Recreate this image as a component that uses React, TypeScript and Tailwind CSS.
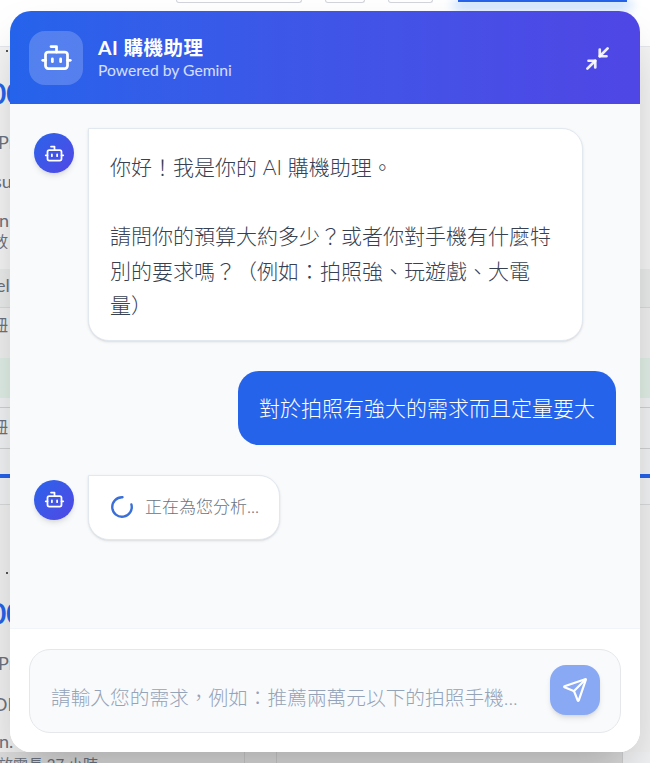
import { Bot, Loader2, Minimize2, Send } from "lucide-react";

const FONT = "font-['Lato','Noto_Sans_CJK_TC',sans-serif]";

// the phone list behind the chat, only its left edge shows
const PageBehind = () => {
  return (
    <div className="flex flex-col h-full text-[#6b7280]">
      <div className="h-[47px] shrink-0 bg-white border-b border-[#e5e7eb] flex items-start">
        <div className="ml-[176px] w-[126px] h-[3px] bg-white border border-t-0 border-[#d1d5db] rounded-b-md"></div>
        <div className="ml-[23px] w-[40px] h-[3px] bg-white border border-t-0 border-[#d1d5db] rounded-b-md"></div>
        <div className="ml-[23px] w-[45px] h-[3px] bg-white border border-t-0 border-[#d1d5db] rounded-b-md"></div>
        <div className="ml-[25px] w-[169px] h-[2px] bg-[#2563eb] shadow-[0_4px_12px_4px_#bfdbfe]"></div>
      </div>
      <div className="flex-1 bg-[#f1f2f3] flex flex-col">
        <div className="h-[222px] bg-[#f4f4f4] overflow-hidden">
          <div className="ml-[6px] mt-[3px] w-[2px] h-[2px] rounded-full bg-[#222]"></div>
          <div className="h-[36px] mt-[23px] -ml-[10px] text-[#2563eb] text-[28px] font-bold leading-[36px]">00</div>
          <div className="h-[28px] mt-[17px] -ml-[2px] text-[18px] leading-[28px]">Pr</div>
          <div className="h-[28px] mt-[12px] -ml-[6px] text-[18px] leading-[26px]">su</div>
          <div className="h-[20px] mt-[15px] -ml-[1px] text-[18px] leading-[18px]">n</div>
          <div className="h-[20px] -ml-[7px] text-[15px] leading-[20px]">放</div>
        </div>
        <div className="h-[39px] bg-[#e9eaea] border-b border-[#d9dadb] -ml-[4px] text-[18px] leading-[32px]">el</div>
        <div className="h-[50px] bg-[#efefef] -ml-[8px] text-[16px] leading-[34px]">鈕</div>
        <div className="h-[40px] bg-[#dfeee6]"></div>
        <div className="h-[10px] border-b border-[#cfd0d1]"></div>
        <div className="h-[41px] border-b border-[#cfd0d1] -ml-[8px] text-[16px] leading-[38px]">鈕</div>
        <div className="h-[25px]"></div>
        <div className="h-[4px] bg-[#2563eb]"></div>
        <div className="h-[27px] border-b border-[#d9dadb]"></div>
        <div className="h-[247px] bg-[#f0f0f0] overflow-hidden">
          <div className="ml-[6px] mt-[67px] w-[2px] h-[2px] rounded-full bg-[#222]"></div>
          <div className="h-[36px] mt-[21px] -ml-[10px] text-[#2563eb] text-[28px] font-bold leading-[36px]">00</div>
          <div className="h-[28px] mt-[18px] -ml-[2px] text-[18px] leading-[28px]">Pr</div>
          <div className="h-[28px] mt-[13px] -ml-[7px] text-[18px] leading-[28px]">OI</div>
          <div className="h-[20px] mt-[14px] -ml-[1px] text-[18px] leading-[18px]">n.</div>
        </div>
        <div className="flex-1 w-[623px] flex border-r border-[#cfd0d1] bg-[#dcdcdc]">
          <div className="w-[245px] border-r border-[#c9cacb] overflow-hidden whitespace-nowrap">
            <div className="-ml-[2px] text-[15px] leading-[24px]">放電長 27 小時</div>
          </div>
          <div className="w-[32px] border-r border-[#c9cacb]"></div>
        </div>
      </div>
    </div>
  );
};

const BotAvatar = () => {
  return (
    <div className="w-10 h-10 mt-[5px] shrink-0 rounded-full bg-gradient-to-br from-[#2563eb] to-[#4f46e5] shadow-md flex items-center justify-center text-white">
      <Bot size={21} />
    </div>
  );
};

export default function App() {
  return (
    <div className={`relative h-[763px] w-[650px] overflow-hidden ${FONT}`}>
      <PageBehind />

      <div className="absolute left-[10px] top-[11px] w-[630px] h-[741px] rounded-[21px] overflow-hidden bg-white shadow-2xl flex flex-col">
        {/* Header */}
        <div className="h-[93px] shrink-0 px-[19px] flex items-center justify-between bg-gradient-to-r from-[#2563eb] to-[#4f46e5] text-white">
          <div className="flex items-center gap-[15px]">
            <div className="w-[54px] h-[54px] rounded-2xl bg-white/20 flex items-center justify-center">
              <Bot size={33} />
            </div>
            <div>
              <div className="text-[19.5px] leading-[25px] font-bold tracking-wide">AI 購機助理</div>
              <div className="text-[15.7px] leading-[21px] text-white/80">Powered by Gemini</div>
            </div>
          </div>
          <div className="w-[26px] h-[26px] mr-[11px] text-white/90">
            <Minimize2 size={27} strokeWidth={2.4} />
          </div>
        </div>

        {/* Messages */}
        <div className="flex-1 bg-[#f8fafc] px-[24px] pt-[24px] flex flex-col gap-[30px]">
          <div className="flex gap-[14px] items-start">
            <BotAvatar />
            <div className="w-[495px] bg-white border border-[#e2e8f0] rounded-[21px] rounded-tl-none px-[21px] pt-[21px] pb-[17px] text-[21px] leading-[34.5px] text-[#374151] font-light shadow-sm whitespace-pre-wrap">
              {"你好\uFF01我是你的 AI 購機助理。\n\n請問你的預算大約多少\uFF1F或者你對手機有什麼特別的要求嗎\uFF1F\uFF08例如\uFF1A拍照強、玩遊戲、大電量\uFF09"}
            </div>
          </div>

          <div className="flex justify-end">
            <div className="h-[74px] px-[21px] flex items-center bg-[#2563eb] rounded-[21px] rounded-br-none text-[21px] font-light text-white whitespace-nowrap">
              對於拍照有強大的需求而且定量要大
            </div>
          </div>

          <div className="flex gap-[14px] items-start">
            <BotAvatar />
            <div className="h-[65px] px-[20px] flex items-center gap-[10px] bg-white border border-[#e2e8f0] rounded-[21px] rounded-tl-none shadow-sm">
              <Loader2 size={26} strokeWidth={2.2} className="text-[#3b6fd8] rotate-[-15deg]" />
              <span className="text-[17px] font-light text-[#6b7280]">正在為您分析...</span>
            </div>
          </div>
        </div>

        {/* Input */}
        <div className="h-[124px] shrink-0 bg-white border-t border-[#f1f5f9] px-[19px] pt-[20px]">
          <div className="h-[84px] rounded-[21px] border border-[#e5e7eb] bg-[#f8fafc] pl-[21px] pr-[20px] flex items-center gap-[20px]">
            <input
              className="flex-1 min-w-0 mt-[14px] bg-transparent outline-none text-[19.7px] font-light placeholder:text-[#94a3b8]"
              placeholder={"請輸入您的需求\uFF0C例如\uFF1A推薦兩萬元以下的拍照手機..."}
            />
            <button className="w-[50px] h-[50px] mb-[2px] shrink-0 rounded-2xl bg-[#8aa9f4] shadow-md flex items-center justify-center text-white">
              <Send size={26} />
            </button>
          </div>
        </div>
      </div>
    </div>
  );
}
